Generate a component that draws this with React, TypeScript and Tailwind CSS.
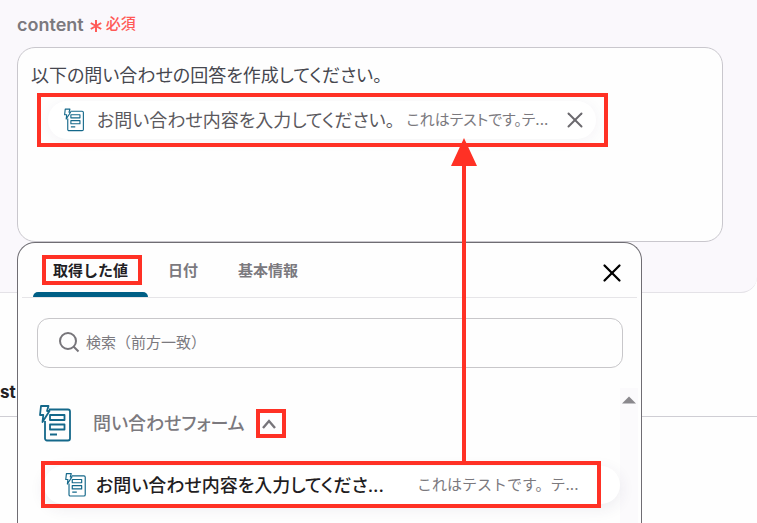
/**
 * Content field with an inserted value chip and the value picker below it
 */
import React, { useState } from 'react';
import { X } from 'lucide-react';

const TABS = ['取得した値', '日付', '基本情報'];

function FormIcon({ className }: { className: string }) {
  return (
    <svg className={className} viewBox="0 0 32 37" fill="none" stroke="#14688a" strokeLinejoin="round" aria-hidden="true">
      <path strokeWidth={1.8} d="M10 4.5h19a2 2 0 0 1 2 2v27a2 2 0 0 1-2 2H8a2 2 0 0 1-2-2V16" />
      <path strokeWidth={1.8} d="M2 1h7.5L8 6h2.5L3.5 17l.8-7H1z" />
      <path strokeWidth={1.8} d="M11 10h14.5v5H11zM11 19.5h14.5v5H11zM11 29.5h7" />
    </svg>
  );
}

function Highlight({ className }: { className: string }) {
  return <span aria-hidden="true" className={`pointer-events-none absolute border-4 border-[#ff3125] ${className}`} />;
}

function ValueChip({ onRemove }: { onRemove: () => void }) {
  return (
    <div className="relative mt-[11px] ml-[17px] flex h-[38px] max-w-[548px] items-center rounded-full bg-white pr-2 pl-4 shadow-[0_2px_14px_rgba(60,40,90,0.05)]">
      <FormIcon className="h-6 w-5 shrink-0" />
      <span className="ml-[13px] text-[18px] whitespace-nowrap text-[#5b595e]">お問い合わせ内容を入力してください。</span>
      <span className="ml-3 text-[15px] whitespace-nowrap text-[#7b797e]">これはテストです。テ...</span>
      <button type="button" aria-label="削除" onClick={onRemove} className="ml-auto text-[#6b696e]">
        <X size={26} strokeWidth={1.8} />
      </button>
      <Highlight className="-top-2 -right-3 -bottom-2 -left-[11px]" />
    </div>
  );
}

function ValuePicker() {
  const [activeTab, setActiveTab] = useState(TABS[0]);
  const [isOpen, setIsOpen] = useState(true);

  return (
    <div className="absolute top-full left-0 z-10 w-full max-w-[625px] rounded-t-[18px] border border-b-0 border-[#6f6d73] bg-[#fefefe]">
      <div className="mx-1 flex h-[55px] items-stretch border-b border-[#e6e5e8] pl-[11px]" role="tablist">
        {TABS.map((tab) => (
          <button
            key={tab}
            type="button"
            role="tab"
            aria-selected={tab === activeTab}
            onClick={() => setActiveTab(tab)}
            className={`relative px-5 pt-[3px] text-[15px] font-bold ${tab === activeTab ? 'text-[#222024]' : 'text-[#7b797e]'}`}
          >
            {tab}
            {tab === activeTab && (
              <>
                <span className="absolute inset-x-0 bottom-0 h-[5px] rounded-t-[5px] bg-[#005f86]" />
                <Highlight className="top-3 right-[6px] bottom-3 left-[9px]" />
              </>
            )}
          </button>
        ))}
        <button type="button" aria-label="閉じる" className="mr-[10px] ml-auto pt-[5px] text-black">
          <X size={30} strokeWidth={1.8} />
        </button>
      </div>

      <label className="mr-[18px] ml-[19px] mt-5 flex h-[50px] items-center gap-1 rounded-xl border border-[#c8c7ca] pl-5">
        <svg className="h-6 w-6 shrink-0" viewBox="0 0 24 24" fill="none" stroke="#77757a" strokeWidth={2} aria-hidden="true">
          <circle cx="10" cy="10" r="8" />
          <path d="m15.5 15.5 5 5" />
        </svg>
        <input
          type="text"
          aria-label="検索"
          placeholder="検索（前方一致）"
          className="min-w-0 flex-1 bg-transparent pt-px text-[15px] outline-none placeholder:text-[#7b797e]"
        />
      </label>

      <div className="mt-5 mr-[3px] ml-[21px] flex h-[135px]">
        <div className="min-w-0 flex-1 pt-[17px]">
          <div className="flex items-center">
            <FormIcon className="h-[37px] w-8 shrink-0" />
            <span className="ml-[22px] text-[18px] font-medium text-[#7b797e] [font-feature-settings:'palt']">
              問い合わせフォーム
            </span>
            <button
              type="button"
              aria-label="開閉"
              aria-expanded={isOpen}
              onClick={() => setIsOpen(!isOpen)}
              className="relative ml-[11px] flex h-[29px] w-[30px] items-center justify-center"
            >
              <svg className="mr-1 h-4 w-4" viewBox="0 0 16 16" fill="none" stroke="#77757a" strokeWidth={2.4} aria-hidden="true">
                <path d="m2 12 6-7 6 7" />
              </svg>
              <Highlight className="inset-0" />
            </button>
          </div>

          {isOpen && (
            <div className="relative mt-6 ml-[5px]">
              <button
                type="button"
                className="flex h-[38px] w-full items-center rounded-full bg-white pl-[21px] text-left shadow-[0_4px_16px_rgba(60,40,90,0.09)] [font-feature-settings:'palt']"
              >
                <FormIcon className="h-6 w-[21px] shrink-0" />
                <span className="ml-[10px] text-[18px] font-medium whitespace-nowrap text-[#1f1d22]">
                  お問い合わせ内容を入力してくださ...
                </span>
                <span className="ml-[33px] text-[15px] whitespace-nowrap text-[#7b797e] [font-feature-settings:normal]">
                  これはテストです。テ...
                </span>
              </button>
              <Highlight className="-top-[5px] -bottom-1 -left-[3px] w-[560px]" />
              {/* arrow from the selected value up to the chip */}
              <svg className="pointer-events-none absolute bottom-full left-[407px] mb-1 h-[324px] w-[26px]" viewBox="0 0 26 324" aria-hidden="true">
                <path fill="#ff3125" d="M13 0 26 28H15V324H11V28H0z" />
              </svg>
            </div>
          )}
        </div>
        <div className="flex w-[18px] shrink-0 justify-center bg-[#fbfafc] pt-2" aria-hidden="true">
          <svg className="h-2 w-[14px]" viewBox="0 0 14 8">
            <path fill="#8a888d" d="M7 0.5 14 7.5H0z" />
          </svg>
        </div>
      </div>
    </div>
  );
}

export default function App() {
  const [hasChip, setHasChip] = useState(true);

  return (
    <main className="h-screen overflow-hidden bg-[#fefefe] font-['Inter','Noto_Sans_CJK_JP',sans-serif]">
      <section className="rounded-br-2xl border-b border-[#e4e2e7] bg-[#faf8fc] pt-3 pr-[34px] pb-[50px] pl-[17px]">
        <div className="flex h-6 items-center" id="content-label">
          <span className="text-[18px] font-semibold text-[#7b797e]">content</span>
          <svg className="mt-1 ml-[6px] h-3 w-3" viewBox="0 0 12 12" stroke="#ff5a57" strokeWidth={2} aria-hidden="true">
            <path d="M6 0v12M.8 3l10.4 6M11.2 3 .8 9" />
          </svg>
          <span className="ml-1 text-[15px] font-medium text-[#ff5a57]">必須</span>
        </div>

        <div className="relative mt-[11px]">
          <div
            role="textbox"
            aria-labelledby="content-label"
            className="min-h-[195px] rounded-[18px] border border-[#c9c7cd] bg-[#fefefe] px-[13px] pt-[14px] [font-feature-settings:'palt']"
          >
            <p className="text-[18px] leading-7 text-[#46474f]">以下の問い合わせの回答を作成してください。</p>
            {hasChip && <ValueChip onRemove={() => setHasChip(false)} />}
          </div>
          <ValuePicker />
        </div>
      </section>

      <section className="mt-[87px] border-b border-[#cfced4] pb-3">
        <h2 className="text-[17px] leading-6 font-bold text-[#222024]">st</h2>
      </section>
    </main>
  );
}
